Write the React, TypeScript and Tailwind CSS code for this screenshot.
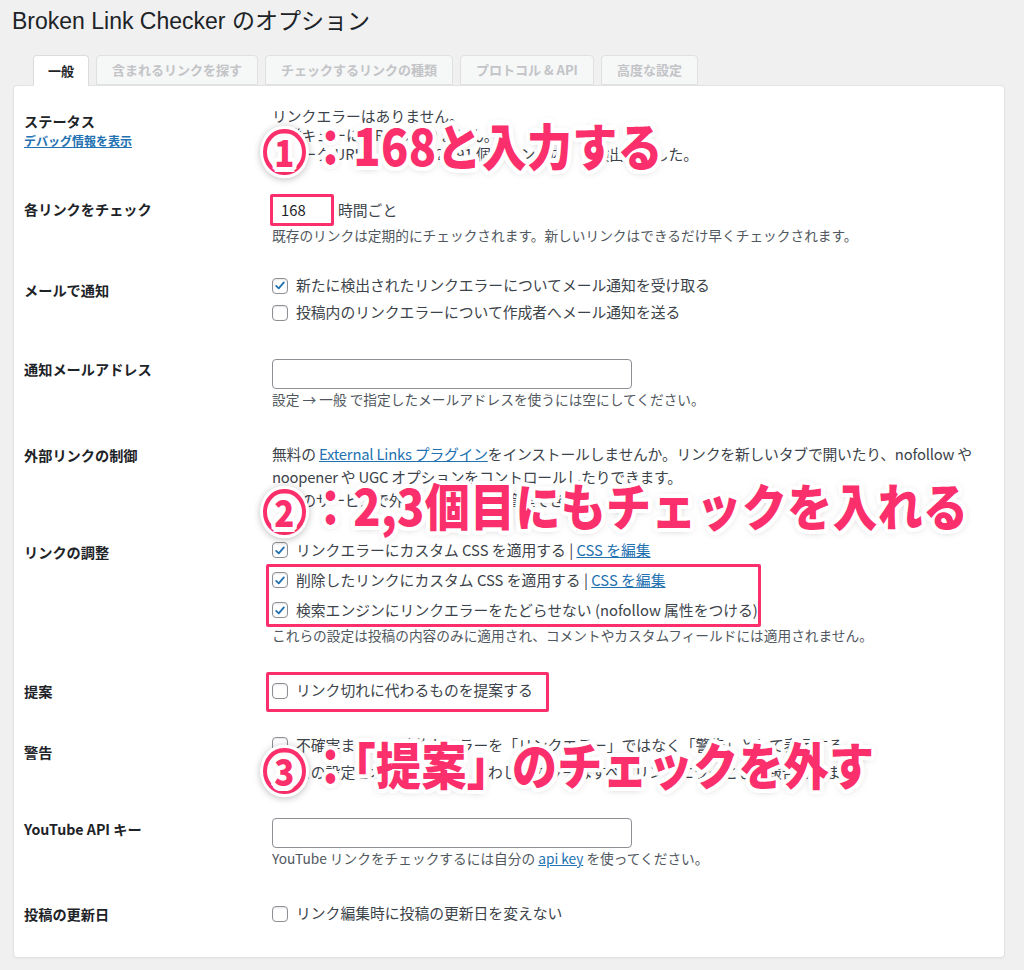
import React from "react";

const pink = "text-[#fb2f6c]";

function Checkbox({ checked }: { checked?: boolean }) {
    return (
        <span className="inline-flex items-center justify-center w-[16px] h-[16px] shrink-0 rounded-[4px] border border-[#8c8f94] bg-white shadow-[inset_0_1px_2px_rgba(0,0,0,0.1)]">
            {checked && (
                <svg viewBox="0 0 20 20" className="w-[17px] h-[17px]">
                    <path d="M4.5 10.5 L8.2 14 L15.5 5.5" fill="none" stroke="#2271b1" strokeWidth="2.6" strokeLinecap="round" strokeLinejoin="round" />
                </svg>
            )}
        </span>
    );
}

function CheckLine({ checked, children, h = "h-[27px]" }: { checked?: boolean; children: React.ReactNode; h?: string }) {
    return (
        <label className={"flex items-center gap-[8px] " + h}>
            <Checkbox checked={checked} />
            <span>{children}</span>
        </label>
    );
}

function Row({ label, labelPt, contentPt, h, children }: { label: React.ReactNode; labelPt: string; contentPt: string; h: string; children: React.ReactNode }) {
    return (
        <div className={"flex " + h}>
            <div className={"w-[248px] shrink-0 font-bold text-[14.2px] leading-[20px] text-[#1d2327] " + labelPt}>{label}</div>
            <div className={"flex-1 " + contentPt}>{children}</div>
        </div>
    );
}

// circled number drawn as a ring, the digit stays text
function Num({ n }: { n: string }) {
    return (
        <span className="inline-flex items-center justify-center w-[43px] h-[41px] rounded-full border-[4px] border-[#fb2f6c] bg-white text-[33px] leading-none mr-[2px] align-[-1px] shadow-[0_0_0_3px_#fff,0_1px_7px_3px_rgba(0,0,0,0.25)]">
            {n}
        </span>
    );
}

function Note({ top, children }: { top: string; children: React.ReactNode }) {
    return (
        <div
            className={
                "absolute left-[249px] whitespace-nowrap font-black text-[45px] leading-[44px] tracking-[0.3px] scale-y-[1.12] origin-center pointer-events-none " +
                pink +
                " " +
                top +
                " [text-shadow:4px_0_0_#fff,-4px_0_0_#fff,0_4px_0_#fff,0_-4px_0_#fff,3px_3px_0_#fff,-3px_-3px_0_#fff,3px_-3px_0_#fff,-3px_3px_0_#fff,4px_2px_0_#fff,-4px_2px_0_#fff,4px_-2px_0_#fff,-4px_-2px_0_#fff,2px_4px_0_#fff,-2px_4px_0_#fff,2px_-4px_0_#fff,-2px_-4px_0_#fff,0_1px_8px_rgba(0,0,0,0.35)]"
            }
        >
            {children}
        </div>
    );
}

const desc = "text-[13.7px] leading-[19px] text-[#50575e]";
const link = "text-[#2271b1] underline";

export default function App() {
    const tabs = ["含まれるリンクを探す", "チェックするリンクの種類", "プロトコル & API", "高度な設定"];

    return (
        <div className="min-h-[970px] bg-[#f0f0f1] font-['Noto_Sans_CJK_JP','Liberation_Sans',sans-serif] text-[#3c434a] text-[14.8px] pb-[13px]">
            <h1 className="pl-[12px] pt-[4px] h-[55px] text-[23px] leading-[30px] text-[#1d2327] font-['Liberation_Sans','Noto_Sans_CJK_JP',sans-serif]">
                Broken Link Checker <span className="font-['Noto_Sans_CJK_JP',sans-serif]">のオプション</span>
            </h1>

            {/* tabs */}
            <div className="flex pl-[33px] gap-[7px] h-[31px] relative z-10">
                <div className="px-[14px] h-[31px] flex items-center bg-white border border-b-0 border-[#dcdcde] rounded-t-[4px] font-bold text-[13px] text-[#1d2327]">
                    一般
                </div>
                {tabs.map((t) => (
                    <div key={t} className="px-[15px] h-[30px] flex items-center bg-[#f6f7f7] border border-[#e0e0e0] rounded-t-[4px] font-bold text-[13px] text-[#c3c4c7]">
                        {t}
                    </div>
                ))}
            </div>

            {/* card */}
            <div className="relative ml-[13px] w-[992px] -mt-[1px] bg-white border border-[#e2e2e2] rounded-[4px] pl-[10px] shadow-[0_1px_2px_rgba(0,0,0,0.04)]">
                <Row label={<><div className="h-[19px] leading-[19px]">ステータス</div><a className={"block text-[12px] leading-[19px] " + link}>デバッグ情報を表示</a></>} labelPt="pt-[26px]" contentPt="pt-[20px]" h="h-[104px]">
                    <div className="leading-[19px]">
                        <div>リンクエラーはありません。</div>
                        <div>作業キューに URL はありません。</div>
                        <div>ユニーク URL 1,284 個（2,391 個のリンク内）を検出しました。</div>
                    </div>
                </Row>

                <Row label="各リンクをチェック" labelPt="pt-[9px]" contentPt="pt-[4px]" h="h-[75px]">
                    <div className="flex items-center gap-[4px]">
                        <div className="-ml-[2px] w-[64px] h-[32px] border-[3px] border-[#fb2f6c] rounded-[2px] flex items-center pl-[8px] text-[#1d2327]">168</div>
                        <span>時間ごと</span>
                    </div>
                    <div className={desc}>既存のリンクは定期的にチェックされます。新しいリンクはできるだけ早くチェックされます。</div>
                </Row>

                <Row label="メールで通知" labelPt="pt-[15px]" contentPt="pt-[7px]" h="h-[80px]">
                    <CheckLine checked>新たに検出されたリンクエラーについてメール通知を受け取る</CheckLine>
                    <CheckLine>投稿内のリンクエラーについて作成者へメール通知を送る</CheckLine>
                </Row>

                <Row label="通知メールアドレス" labelPt="pt-[14px]" contentPt="pt-[14px]" h="h-[85px]">
                    <div className="w-[360px] h-[30px] border border-[#8c8f94] rounded-[4px] bg-white" />
                    <div className={desc + " mt-[1px]"}>設定 → 一般 で指定したメールアドレスを使うには空にしてください。</div>
                </Row>

                <Row label="外部リンクの制御" labelPt="pt-[15px]" contentPt="pt-[12px]" h="h-[100px]">
                    <div className="leading-[23px] whitespace-nowrap tracking-[-0.2px]">
                        <div>
                            無料の <a className={link}>External Links プラグイン</a>をインストールしませんか。リンクを新しいタブで開いたり、nofollow や
                        </div>
                        <div>noopener や UGC オプションをコントロールしたりできます。</div>
                        <div>以上のサービスで外部リンクを一括管理できます。</div>
                    </div>
                </Row>

                <Row label="リンクの調整" labelPt="pt-[12px]" contentPt="pt-[5px]" h="h-[130px]">
                    <CheckLine checked h="h-[30px]">
                        リンクエラーにカスタム CSS を適用する | <a className={link}>CSS を編集</a>
                    </CheckLine>
                    <CheckLine checked h="h-[30px]">
                        削除したリンクにカスタム CSS を適用する | <a className={link}>CSS を編集</a>
                    </CheckLine>
                    <CheckLine checked h="h-[30px]">
                        検索エンジンにリンクエラーをたどらせない (nofollow 属性をつける)
                    </CheckLine>
                    <div className={desc + " mt-[1px]"}>これらの設定は投稿の内容のみに適用され、コメントやカスタムフィールドには適用されません。</div>
                </Row>

                <Row label="提案" labelPt="pt-[21px]" contentPt="pt-[17px]" h="h-[65px]">
                    <CheckLine>リンク切れに代わるものを提案する</CheckLine>
                </Row>

                <Row label="警告" labelPt="pt-[17px]" contentPt="pt-[6px]" h="h-[80px]">
                    <div className="leading-[27px]">
                        <div className="flex items-center gap-[8px]">
                            <Checkbox />
                            <span>不確実または一時的なエラーを「リンクエラー」ではなく「警告」として表示する</span>
                        </div>
                        <div className="pl-[24px]">この設定をオフにすると、疑わしいエラーはすべてリンクエラーとして報告されます。</div>
                    </div>
                </Row>

                <Row label="YouTube API キー" labelPt="pt-[14px]" contentPt="pt-[13px]" h="h-[85px]">
                    <div className="w-[360px] h-[30px] border border-[#8c8f94] rounded-[4px] bg-white" />
                    <div className={desc + " mt-[1px]"}>
                        YouTube リンクをチェックするには自分の <a className={link}>api key</a> を使ってください。
                    </div>
                </Row>

                <Row label="投稿の更新日" labelPt="pt-[14px]" contentPt="pt-[10px]" h="h-[67px]">
                    <CheckLine>リンク編集時に投稿の更新日を変えない</CheckLine>
                </Row>

                {/* annotations */}
                <div className="absolute left-[252px] top-[478px] w-[495px] h-[63px] border-[3px] border-[#fb2f6c] rounded-[2px] pointer-events-none" />
                <div className="absolute left-[252px] top-[586px] w-[283px] h-[40px] border-[3px] border-[#fb2f6c] rounded-[2px] pointer-events-none" />
                <Note top="top-[37px]"><Num n="1" />：168と入力する</Note>
                <Note top="top-[397px]"><Num n="2" />：2,3個目にもチェックを入れる</Note>
                <Note top="top-[656px]"><Num n="3" />：「提案」のチェックを外す</Note>
            </div>
        </div>
    );
}
